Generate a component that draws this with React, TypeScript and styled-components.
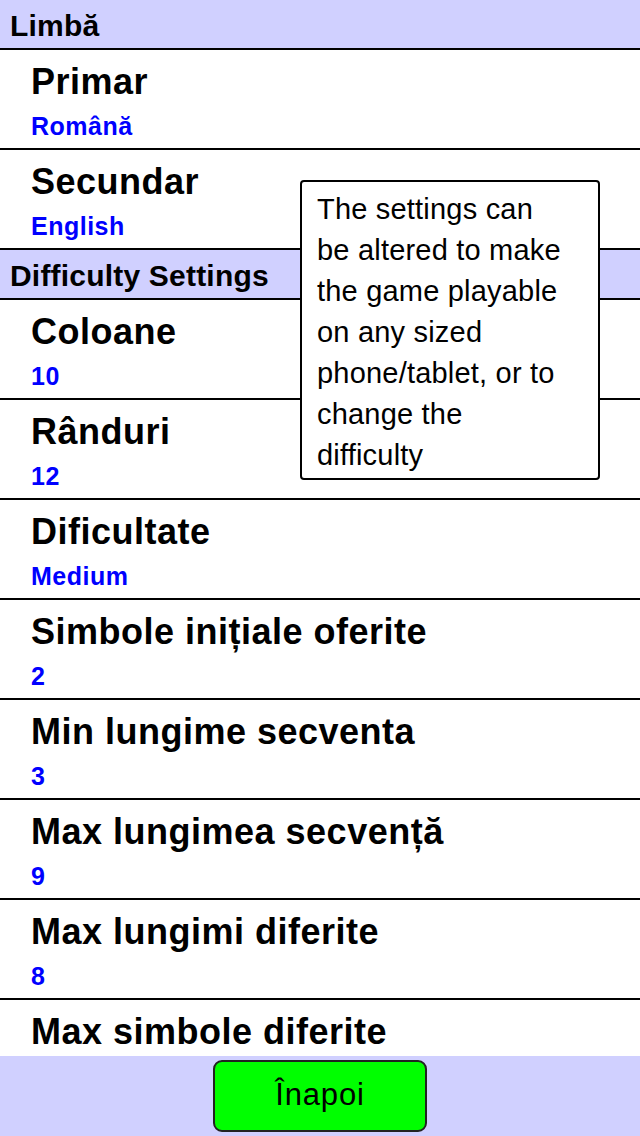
import React from "react";
import styled, { createGlobalStyle } from "styled-components";

const GlobalStyle = createGlobalStyle`
	html, body {
		margin: 0;
		padding: 0;
		background: #ffffff;
	}
	body {
		font-family: "Liberation Sans", Arial, sans-serif;
	}
`;

const Screen = styled.div`
	position: relative;
	display: flex;
	flex-direction: column;
	width: 640px;
	height: 1136px;
	overflow: hidden;
	background: #ffffff;
`;

const List = styled.div`
	flex: 1;
	overflow: hidden;
	display: flex;
	flex-direction: column;
`;

const SectionHeader = styled.div`
	flex: none;
	box-sizing: border-box;
	height: 50px;
	padding: 3px 0 0 10px;
	background: #d0d0ff;
	border-bottom: 2px solid #000;
	font-size: 30px;
	line-height: 45px;
	font-weight: bold;
	letter-spacing: 0.2px;
	color: #000;
`;

const Row = styled.div`
	flex: none;
	box-sizing: border-box;
	height: 100px;
	padding: 12px 0 0 31px;
	border-bottom: 2px solid #000;
`;

const Title = styled.div`
	font-size: 36px;
	line-height: 40px;
	font-weight: bold;
	letter-spacing: 0.5px;
	color: #000;
	white-space: nowrap;
`;

const Value = styled.div`
	margin-top: 10px;
	font-size: 25px;
	line-height: 28px;
	font-weight: bold;
	letter-spacing: 0.5px;
	color: #0000ff;
`;

const Footer = styled.div`
	flex: none;
	height: 80px;
	background: #d0d0ff;
	display: flex;
	justify-content: center;
	padding-top: 4px;
	box-sizing: border-box;
`;

const BackButton = styled.button`
	width: 214px;
	height: 72px;
	box-sizing: border-box;
	background: #00ff00;
	border: 2px solid #222;
	border-radius: 9px;
	font-family: "Liberation Sans", Arial, sans-serif;
	font-size: 31px;
	letter-spacing: 0.8px;
	color: #000;
	padding: 0 0 2px 0;
`;

const Tooltip = styled.div`
	position: absolute;
	left: 300px;
	top: 180px;
	width: 300px;
	height: 300px;
	box-sizing: border-box;
	padding: 7px 30px 0 15px;
	background: #ffffff;
	border: 2px solid #000;
	border-radius: 4px;
	font-size: 29px;
	line-height: 41px;
	letter-spacing: 0.2px;
	color: #000;
`;

type Setting = { title: string; value?: string };

const language: Setting[] = [
	{ title: "Primar", value: "Română" },
	{ title: "Secundar", value: "English" },
];

const difficulty: Setting[] = [
	{ title: "Coloane", value: "10" },
	{ title: "Rânduri", value: "12" },
	{ title: "Dificultate", value: "Medium" },
	{ title: "Simbole inițiale oferite", value: "2" },
	{ title: "Min lungime secventa", value: "3" },
	{ title: "Max lungimea secvență", value: "9" },
	{ title: "Max lungimi diferite", value: "8" },
	{ title: "Max simbole diferite", value: "6" },
];

function SettingRow({ item }: { item: Setting }) {
	return (
		<Row>
			<Title>{item.title}</Title>
			{item.value && <Value>{item.value}</Value>}
		</Row>
	);
}

export default function App() {
	return (
		<Screen>
			<GlobalStyle />
			<List>
				<SectionHeader>Limbă</SectionHeader>
				{language.map((s) => (
					<SettingRow key={s.title} item={s} />
				))}
				<SectionHeader>Difficulty Settings</SectionHeader>
				{difficulty.map((s) => (
					<SettingRow key={s.title} item={s} />
				))}
			</List>
			<Footer>
				<BackButton>Înapoi</BackButton>
			</Footer>
			<Tooltip>
				The settings can be altered to make the game playable on any sized
				phone/tablet, or to change the difficulty
			</Tooltip>
		</Screen>
	);
}
